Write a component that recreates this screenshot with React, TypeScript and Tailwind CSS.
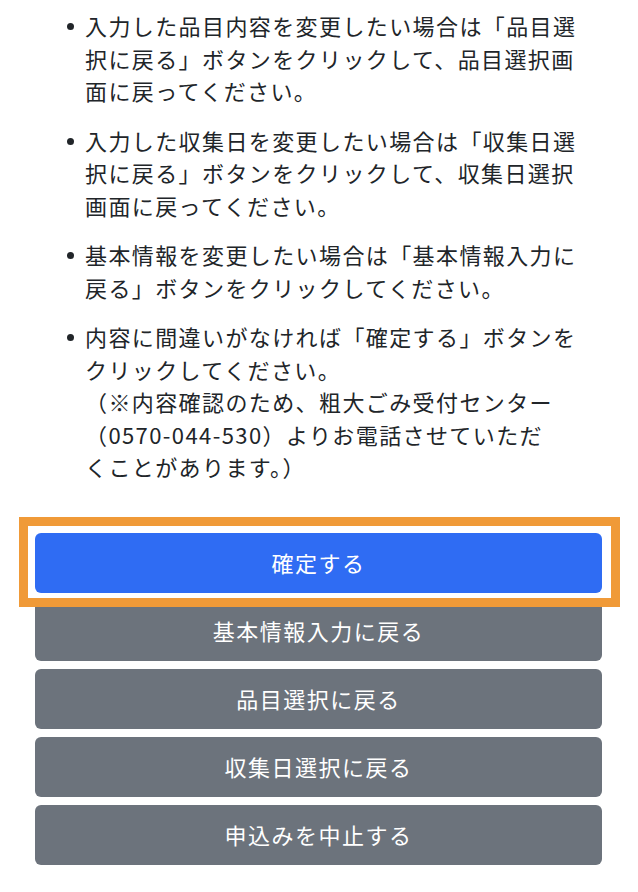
const items = [
  "入力した品目内容を変更したい場合は「品目選択に戻る」ボタンをクリックして、品目選択画面に戻ってください。",
  "入力した収集日を変更したい場合は「収集日選択に戻る」ボタンをクリックして、収集日選択画面に戻ってください。",
  "基本情報を変更したい場合は「基本情報入力に戻る」ボタンをクリックしてください。",
];

const backButtons = ["基本情報入力に戻る", "品目選択に戻る", "収集日選択に戻る", "申込みを中止する"];

function Bullet() {
  return (
    <span className="w-[19px] h-[32.5px] flex items-center shrink-0 pt-[3px]">
      <span className="block w-[7px] h-[7px] rounded-full bg-[#212529] ml-[1px]" />
    </span>
  );
}

export default function App() {
  return (
    <div
      className="relative w-[638px] h-[892px] bg-white overflow-hidden text-[#212529]"
      style={{ fontFamily: '"Noto Sans CJK JP", "Noto Sans", sans-serif' }}
    >
      <ul className="pt-[9px] pl-[66px] flex flex-col gap-[17px]">
        {items.map((text) => (
          <li key={text} className="flex">
            <Bullet />
            <p className="w-[500px] text-[22px] leading-[32.5px] tracking-[1.4px]">{text}</p>
          </li>
        ))}
        <li className="flex">
          <Bullet />
          <p className="w-[500px] text-[22px] leading-[32.5px] tracking-[1.4px]">
            内容に間違いがなければ「確定する」ボタンをクリックしてください。
            <br />
            （※内容確認のため、粗大ごみ受付センター（0570-044-530）よりお電話させていただ
            <br />
            くことがあります。）
          </p>
        </li>
      </ul>

      <div className="mt-[50px] px-[35px] flex flex-col gap-[8px]">
        <button className="h-[60px] w-[567px] rounded-[6px] bg-[#2f6cf3] text-white text-[22px] tracking-[1.5px]">
          確定する
        </button>
        {backButtons.map((label) => (
          <button
            key={label}
            className="h-[60px] w-[567px] rounded-[6px] bg-[#6c737c] text-white text-[22px] tracking-[1.5px]"
          >
            {label}
          </button>
        ))}
      </div>

      {/* annotation frame around the confirm button */}
      <div className="absolute left-[19px] top-[517px] w-[601px] h-[90px] border-[9px] border-[#f09a38] pointer-events-none" />
    </div>
  );
}
